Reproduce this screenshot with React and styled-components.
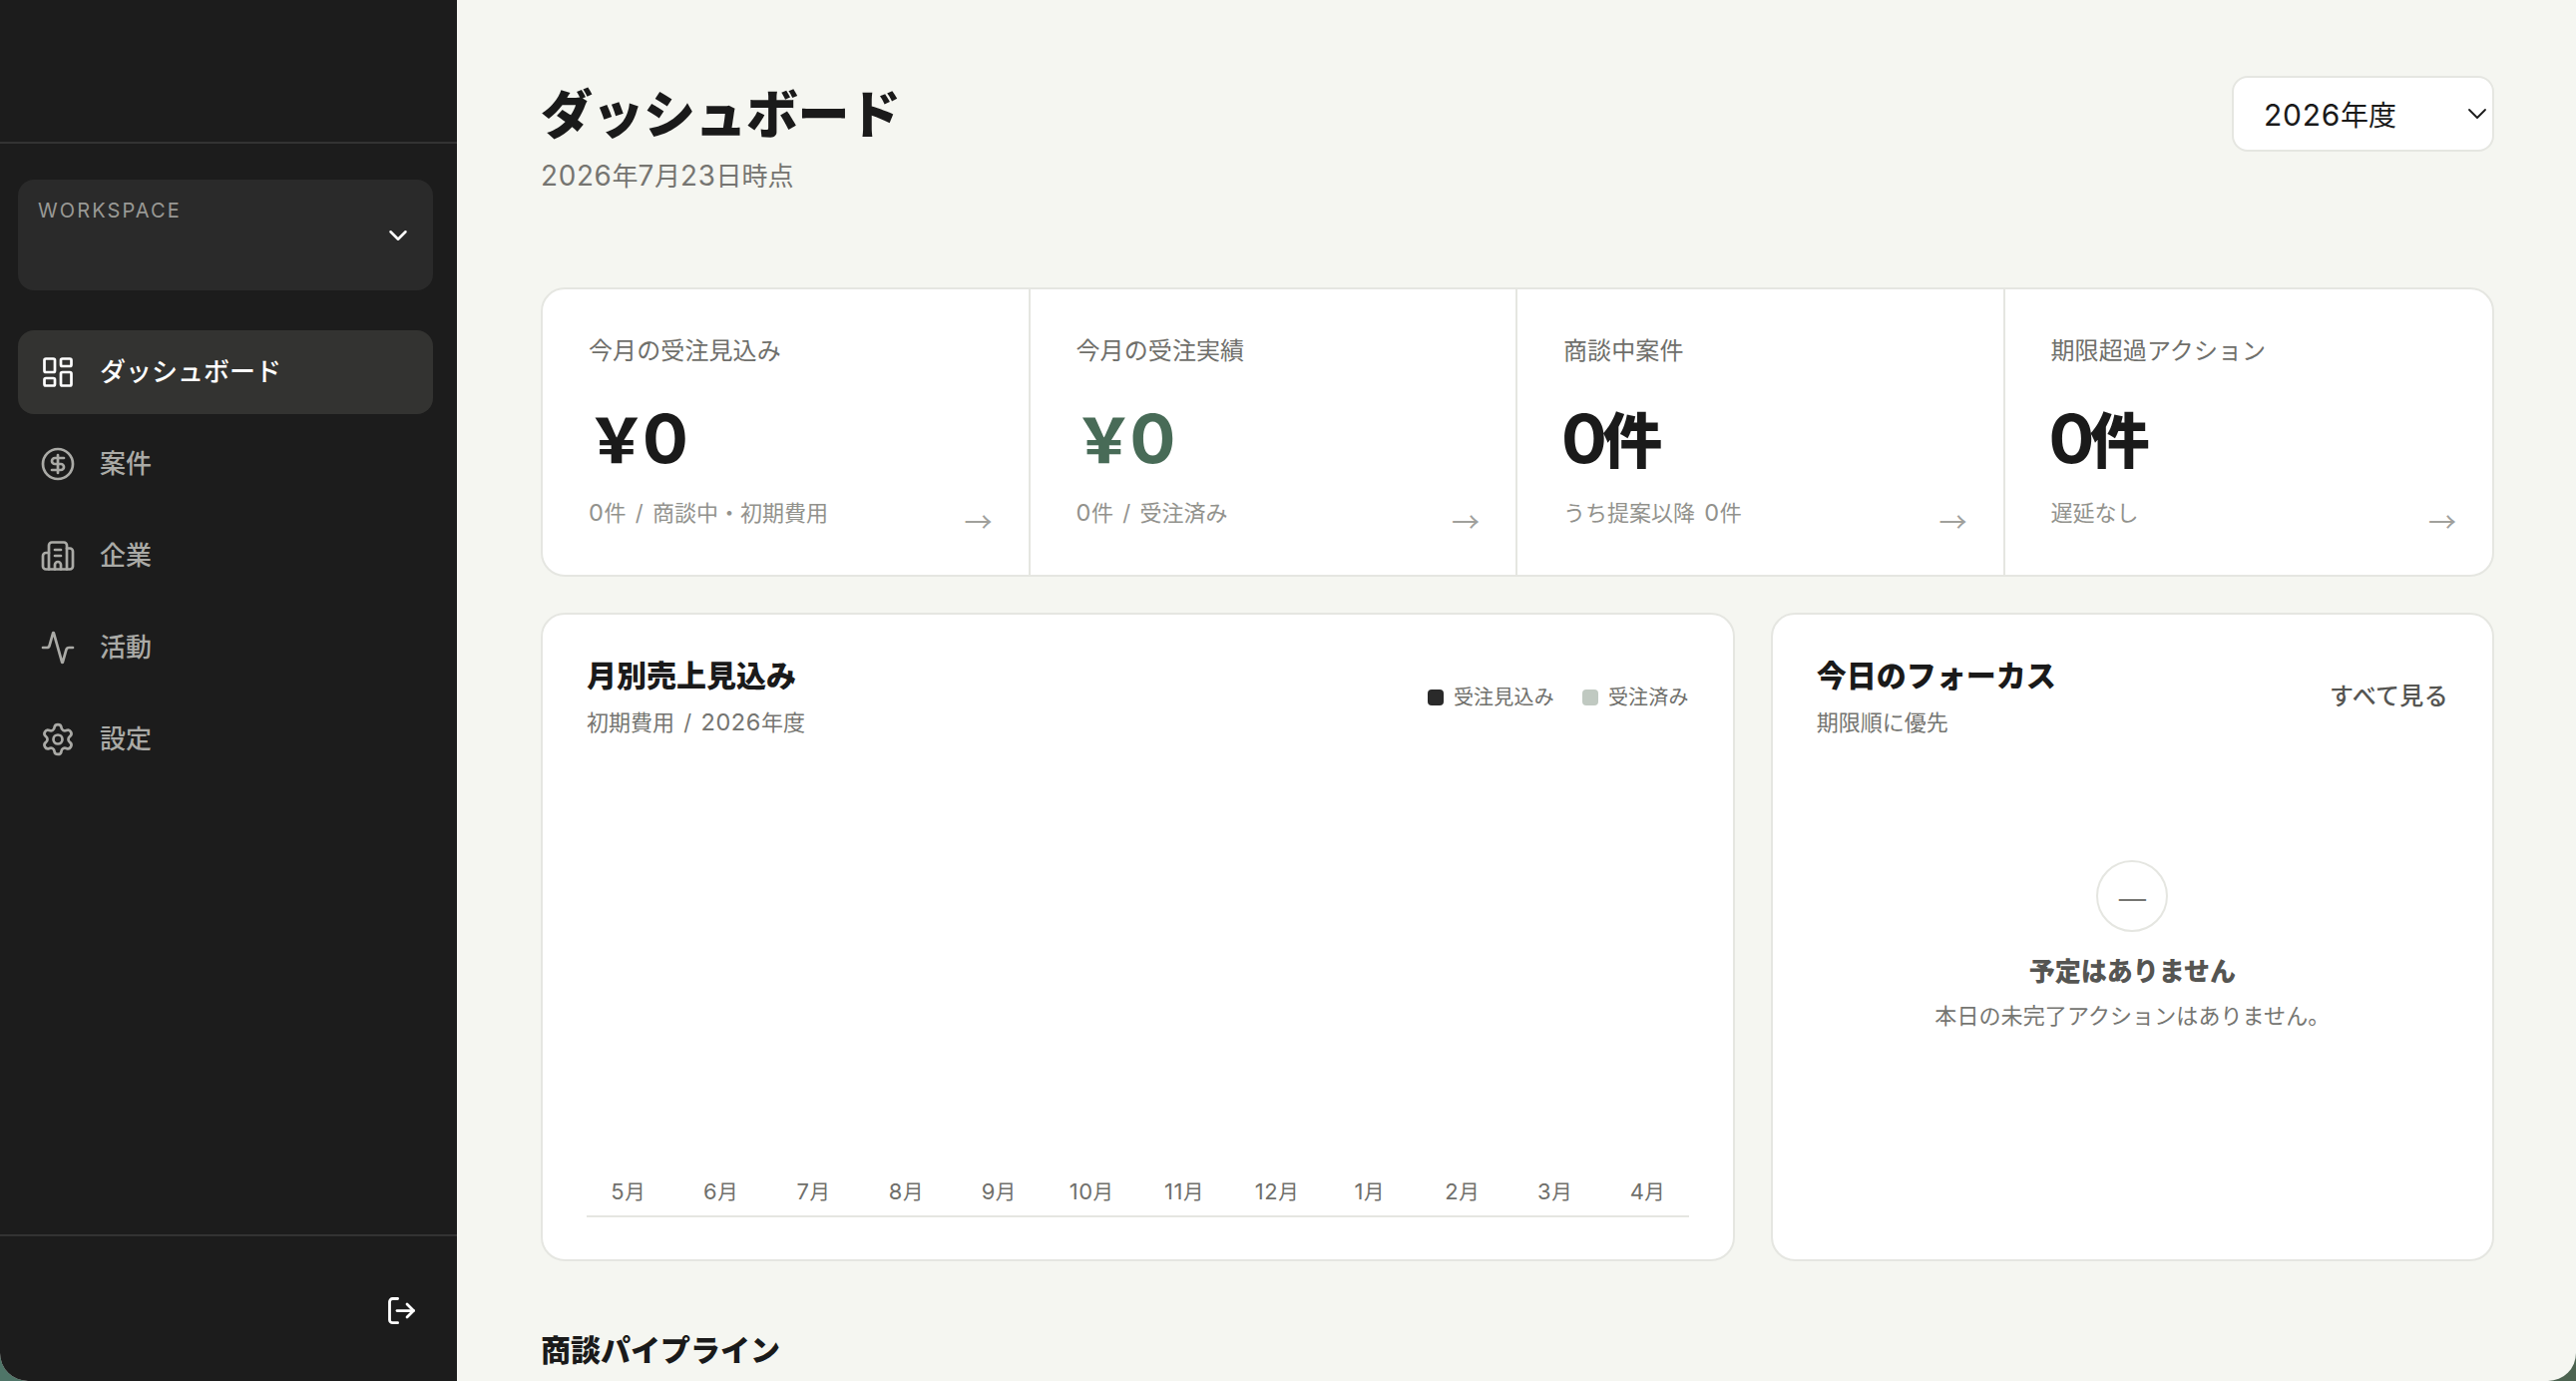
import styled, { createGlobalStyle } from "styled-components";
import {
  Activity,
  Building2,
  ChevronDown,
  CircleDollarSign,
  LayoutDashboard,
  Settings,
} from "lucide-react";

const navItems = [
  { label: "ダッシュボード", icon: LayoutDashboard, active: true },
  { label: "案件", icon: CircleDollarSign },
  { label: "企業", icon: Building2 },
  { label: "活動", icon: Activity },
  { label: "設定", icon: Settings },
];

const stats = [
  { label: "今月の受注見込み", value: "￥0", note: "0件 / 商談中・初期費用" },
  { label: "今月の受注実績", value: "￥0", note: "0件 / 受注済み", green: true },
  { label: "商談中案件", value: "0件", note: "うち提案以降 0件" },
  { label: "期限超過アクション", value: "0件", note: "遅延なし" },
];

const months = [5, 6, 7, 8, 9, 10, 11, 12, 1, 2, 3, 4];

// Latin digits sit a little small next to kanji, so they get their own size
const Mixed = ({ children }) =>
  children
    .split(/([0-9]+)/)
    .map((part, i) => (i % 2 ? <Num key={i}>{part}</Num> : part));

const Sidebar = () => {
  return (
    <Aside>
      <Brand />
      <Workspace>
        <WorkspaceLabel>WORKSPACE</WorkspaceLabel>
        <ChevronDown size={30} strokeWidth={2} />
      </Workspace>
      <Nav>
        {navItems.map(({ label, icon: Icon, active }) => (
          <NavItem key={label} href="#" $active={active}>
            <Icon size={36} strokeWidth={1.8} />
            <span>{label}</span>
          </NavItem>
        ))}
      </Nav>
      <AsideFooter>
        <LogoutButton aria-label="logout">
          <svg width="32" height="32" viewBox="0 0 32 32" fill="none" stroke="currentColor" strokeWidth="2.8" strokeLinecap="round" strokeLinejoin="round">
            <path d="M12.6 3.5H7.5a3 3 0 0 0-3 3v18.2a3 3 0 0 0 3 3h5.1" />
            <path d="M12 15.6h16.5" />
            <path d="M22 9.1l6.5 6.5-6.5 6.5" />
          </svg>
        </LogoutButton>
      </AsideFooter>
    </Aside>
  )
}

const App = () => {
  return (
    <Desktop>
      <GlobalStyle />
      <Window>
        <Sidebar />
        <Main>
          <Header>
            <div>
              <Title>ダッシュボード</Title>
              <DateText><Mixed>2026年7月23日時点</Mixed></DateText>
            </div>
            <YearSelect>
              <span><Mixed>2026年度</Mixed></span>
              <svg width="20" height="12" viewBox="0 0 20 12" fill="none" stroke="currentColor" strokeWidth="1.8" strokeLinecap="round" strokeLinejoin="round">
                <path d="M2 2l8 8 8-8" />
              </svg>
            </YearSelect>
          </Header>

          <Stats>
            {stats.map((stat) => (
              <Stat key={stat.label}>
                <StatLabel>{stat.label}</StatLabel>
                <StatValue $green={stat.green}><Mixed>{stat.value}</Mixed></StatValue>
                <StatFoot>
                  <StatNote><Mixed>{stat.note}</Mixed></StatNote>
                  <Arrow>→</Arrow>
                </StatFoot>
              </Stat>
            ))}
          </Stats>

          <Panels>
            <Panel>
              <PanelHead>
                <div>
                  <PanelTitle>月別売上見込み</PanelTitle>
                  <PanelSub><Mixed>初期費用 / 2026年度</Mixed></PanelSub>
                </div>
                <Legend>
                  <LegendItem $color="#2a2a2a">受注見込み</LegendItem>
                  <LegendItem $color="#c0c9c1">受注済み</LegendItem>
                </Legend>
              </PanelHead>
              <Chart>
                {months.map((month) => (
                  <Month key={month}><Mixed>{`${month}月`}</Mixed></Month>
                ))}
              </Chart>
            </Panel>

            <Panel>
              <PanelHead>
                <div>
                  <PanelTitle>今日のフォーカス</PanelTitle>
                  <PanelSub>期限順に優先</PanelSub>
                </div>
                <AllLink href="#">すべて見る</AllLink>
              </PanelHead>
              <Empty>
                <EmptyMark>—</EmptyMark>
                <EmptyTitle>予定はありません</EmptyTitle>
                <EmptyText>本日の未完了アクションはありません。</EmptyText>
              </Empty>
            </Panel>
          </Panels>

          <SectionTitle>商談パイプライン</SectionTitle>
        </Main>
      </Window>
    </Desktop>
  )
}

const GlobalStyle = createGlobalStyle`
  * {
    box-sizing: border-box;
  }

  body {
    margin: 0;
    font-family: Inter, "Noto Sans CJK JP", sans-serif;
    color: #1a1a1a;
  }

  h1, h2, p {
    margin: 0;
  }
`;

const Num = styled.span`
  font-size: 1.07em;
  line-height: 1;
  letter-spacing: 0.025em;
`;

const Desktop = styled.div`
  height: 1384px;
  overflow: hidden;
  background: linear-gradient(90deg, #4f7568 50%, #4c6350 50%);
`;

const Window = styled.div`
  display: flex;
  height: 1384px;
  overflow: hidden;
  border-radius: 0 0 28px 28px;
  background-color: #f5f6f1;
`;

const Aside = styled.aside`
  display: flex;
  flex-direction: column;
  flex: none;
  width: 458px;
  background-color: #1c1c1c;
  color: #fff;
`;

const Brand = styled.div`
  height: 144px;
  border-bottom: 2px solid #333;
`;

const Workspace = styled.div`
  display: flex;
  justify-content: space-between;
  align-items: center;
  height: 111px;
  margin: 36px 24px 40px 18px;
  padding: 0 20px;
  border-radius: 16px;
  background-color: #2a2a2a;
`;

const WorkspaceLabel = styled.span`
  align-self: flex-start;
  margin-top: 19px;
  font-size: 20px;
  line-height: 24px;
  letter-spacing: 2.1px;
  color: #999995;
`;

const Nav = styled.nav`
  display: flex;
  flex-direction: column;
  gap: 8px;
  flex: 1;
  padding: 0 24px 0 18px;
`;

const NavItem = styled.a`
  display: flex;
  align-items: center;
  gap: 24px;
  height: 84px;
  padding: 0 22px;
  border-radius: 16px;
  font-size: 26px;
  font-weight: 500;
  text-decoration: none;
  color: ${({ $active }) => ($active ? "#fff" : "#aaaaa6")};
  background-color: ${({ $active }) => ($active ? "#333331" : "transparent")};

  span {
    padding-bottom: 5px;
  }
`;

const AsideFooter = styled.div`
  display: flex;
  justify-content: flex-end;
  align-items: center;
  height: 147px;
  padding: 4px 40px 0 0;
  border-top: 2px solid #333;
`;

const LogoutButton = styled.button`
  display: flex;
  padding: 0;
  border: 0;
  background: none;
  color: #fff;
`;

const Main = styled.main`
  flex: 1;
  padding: 76px 82px 0 84px;
`;

const Header = styled.header`
  display: flex;
  justify-content: space-between;
  align-items: flex-start;
  height: 212px;
`;

const Title = styled.h1`
  padding-top: 2px;
  font-size: 52px;
  font-weight: 900;
  line-height: 76px;
  letter-spacing: -0.5px;
`;

const DateText = styled.p`
  margin-top: 5px;
  font-size: 26px;
  line-height: 36px;
  color: #757571;
`;

const YearSelect = styled.div`
  display: flex;
  justify-content: space-between;
  align-items: center;
  width: 263px;
  height: 76px;
  padding: 0 5px 0 30px;
  border: 2px solid #e5e6e1;
  border-radius: 16px;
  background-color: #fff;
  font-size: 28px;

  span {
    padding-bottom: 1px;
  }
`;

const Stats = styled.section`
  display: grid;
  grid-template-columns: repeat(4, 1fr);
  height: 290px;
  border: 2px solid #e5e6e1;
  border-radius: 24px;
  background-color: #fff;
`;

const Stat = styled.div`
  display: flex;
  flex-direction: column;
  padding: 44px 36px 0 46px;

  &:not(:last-child) {
    border-right: 2px solid #e5e6e1;
  }
`;

const StatLabel = styled.p`
  font-size: 24px;
  line-height: 36px;
  letter-spacing: 0.1px;
  color: #6f6f6b;
`;

const StatValue = styled.p`
  height: 80px;
  margin: 32px 0 0 -2px;
  font-size: 60px;
  font-weight: 900;
  line-height: 80px;
  letter-spacing: -4px;
  color: ${({ $green }) => ($green ? "#486b57" : "#1a1a1a")};

  ${Num} {
    font-size: 68px;
    font-weight: 700;
    letter-spacing: -4.5px;
  }
`;

const StatFoot = styled.div`
  display: flex;
  justify-content: space-between;
  align-items: flex-start;
  margin-top: 16px;
`;

const StatNote = styled.p`
  font-size: 22px;
  line-height: 32px;
  word-spacing: 0.14em;
  color: #92928d;
`;

const Arrow = styled.span`
  margin-top: 8px;
  font-family: "Noto Sans CJK JP", sans-serif;
  font-size: 28px;
  line-height: 32px;
  color: #a0a09c;
`;

const Panels = styled.section`
  display: grid;
  grid-template-columns: 1.65fr 1fr;
  gap: 36px;
  height: 650px;
  margin-top: 36px;
`;

const Panel = styled.div`
  display: flex;
  flex-direction: column;
  padding: 39px 44px 42px;
  border: 2px solid #e5e6e1;
  border-radius: 24px;
  background-color: #fff;
`;

const PanelHead = styled.div`
  display: flex;
  justify-content: space-between;
  align-items: center;
`;

const PanelTitle = styled.h2`
  font-size: 30px;
  font-weight: 900;
  line-height: 44px;
`;

const PanelSub = styled.p`
  margin-top: 9px;
  font-size: 22px;
  line-height: 32px;
  word-spacing: 0.14em;
  color: #757571;
`;

const Legend = styled.div`
  display: flex;
  gap: 28px;
  padding-top: 2px;
  font-size: 20px;
  line-height: 30px;
  letter-spacing: 0.2px;
  color: #6f6f6b;
`;

const LegendItem = styled.span`
  display: flex;
  align-items: center;
  gap: 10px;

  &::before {
    content: "";
    width: 16px;
    height: 16px;
    border-radius: 4px;
    background-color: ${({ $color }) => $color};
  }
`;

const AllLink = styled.a`
  padding-top: 1px;
  font-size: 24px;
  font-weight: 500;
  line-height: 36px;
  letter-spacing: 0.3px;
  text-decoration: none;
  color: #555552;
`;

const Chart = styled.div`
  display: grid;
  grid-template-columns: repeat(12, 1fr);
  column-gap: 10px;
  align-items: end;
  flex: 1;
  padding-bottom: 8px;
  border-bottom: 2px solid #e5e6e1;
`;

const Month = styled.span`
  font-size: 20.5px;
  line-height: 30px;
  text-align: center;
  color: #6f6f6b;
`;

const Empty = styled.div`
  display: flex;
  flex-direction: column;
  align-items: center;
  padding-top: 122px;
`;

const EmptyMark = styled.div`
  display: flex;
  justify-content: center;
  align-items: center;
  width: 72px;
  height: 72px;
  border: 2px solid #e5e6e1;
  border-radius: 50%;
  font-family: "Noto Sans CJK JP", sans-serif;
  font-size: 34px;
  line-height: 40px;
  color: #757571;
`;

const EmptyTitle = styled.p`
  margin-top: 21px;
  font-size: 26px;
  font-weight: 900;
  line-height: 38px;
  color: #555552;
`;

const EmptyText = styled.p`
  margin-top: 9px;
  font-size: 22px;
  line-height: 32px;
  letter-spacing: 0.1px;
  color: #757571;
`;

const SectionTitle = styled.h2`
  margin-top: 67px;
  font-size: 30px;
  font-weight: 900;
  line-height: 44px;
`;

export default App
